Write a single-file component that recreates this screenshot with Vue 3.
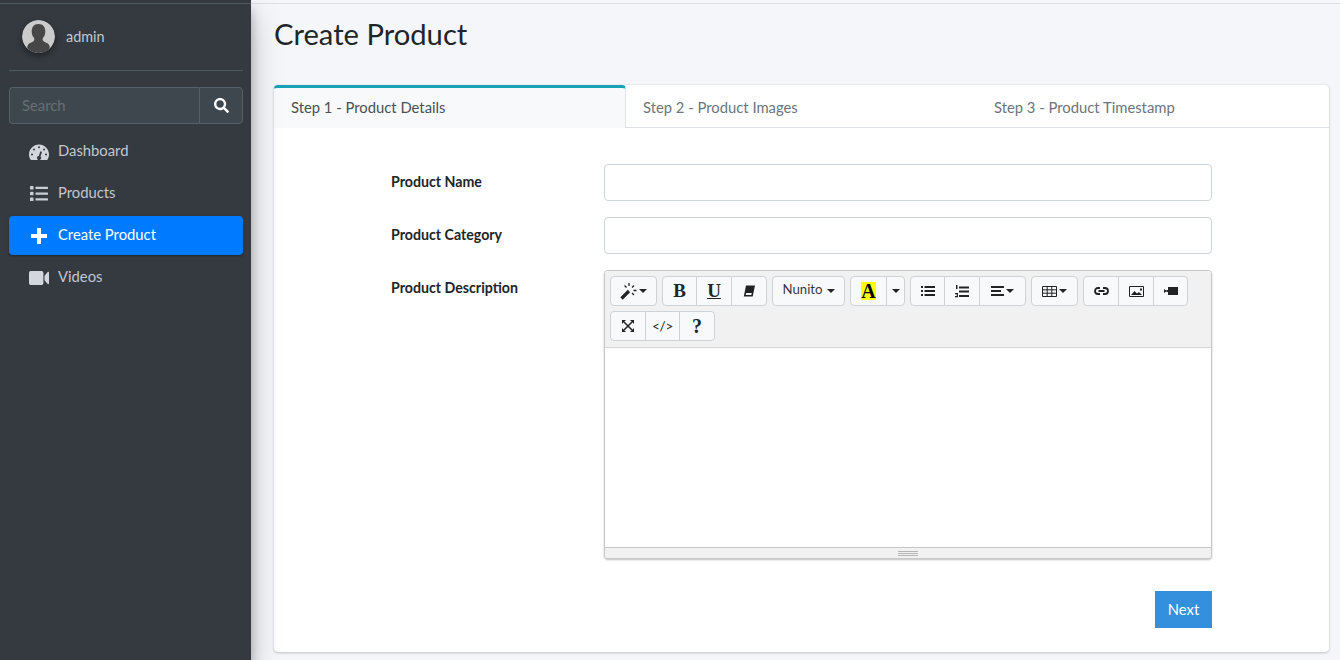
<template>
  <div class="wrapper">
    <aside class="sidebar">
      <div class="sidebar-top"></div>
      <div class="sidebar-body">
        <div class="user-panel">
          <svg class="avatar" viewBox="0 0 33 33">
            <defs><clipPath id="av"><circle cx="16.5" cy="16.5" r="16.5" /></clipPath></defs>
            <g clip-path="url(#av)">
              <rect width="33" height="33" fill="#cbcbcb" />
              <path d="M16.5 4c-4.8 0-7 3.400-6.800 7.800.1 2.800 1 4.800 2.400 6.300.5 1.500.2 2.800-1 3.500-2.600 1.300-5 2-5.800 4.600V33h22.400v-6.800c-.8-2.600-3.200-3.300-5.800-4.600-1.200-.7-1.500-2-1-3.500 1.400-1.500 2.300-3.500 2.400-6.300.2-4.400-2-7.800-6.800-7.800z" fill="#474747" />
            </g>
          </svg>
          <span class="user-name">admin</span>
        </div>
        <div class="search">
          <input class="search-input" placeholder="Search" />
          <button class="search-btn">
            <svg viewBox="0 0 512 512" width="15" height="15"><path fill="#fff" d="M505 442.700L405.300 343c-4.500-4.500-10.600-7-17-7H372c27.600-35.300 44-79.700 44-128C416 93.100 322.900 0 208 0S0 93.100 0 208s93.100 208 208 208c48.300 0 92.700-16.400 128-44v16.300c0 6.400 2.500 12.500 7 17l99.700 99.700c9.400 9.400 24.600 9.400 33.900 0l28.300-28.300c9.400-9.400 9.400-24.600.1-34zM208 336c-70.700 0-128-57.200-128-128 0-70.700 57.200-128 128-128 70.700 0 128 57.200 128 128 0 70.700-57.200 128-128 128z" /></svg>
          </button>
        </div>
        <nav class="nav">
          <a v-for="item in navItems" :key="item.label" class="nav-link" :class="{ active: item.active }">
            <span class="nav-icon">
              <svg v-if="item.icon === 'gauge'" viewBox="0 0 20 16" width="20" height="16">
                <path fill="#d3d6dc" fill-rule="evenodd" d="M10 .5C4.500.5 0 5 0 10.500c0 1.800.5 3.500 1.400 5 .2.300.5.500.9.500h15.400c.4 0 .7-.2.900-.5.9-1.500 1.400-3.200 1.400-5C20 5 15.500.5 10 .5zM10 2.300a1 1 0 1 1 0 2 1 1 0 0 1 0-2zM3 11.500a1 1 0 1 1 0-2 1 1 0 0 1 0 2zm2-5a1 1 0 1 1 0-2 1 1 0 0 1 0 2zm7.800 2.100l-1.300 4a2 2 0 1 1-1.700-.6l1.300-4a.9.9 0 0 1 1.700.6zM17 11.500a1 1 0 1 1 0-2 1 1 0 0 1 0 2zM15 6.500a1 1 0 1 1 0-2 1 1 0 0 1 0 2z" />
              </svg>
              <svg v-else-if="item.icon === 'list'" viewBox="0 0 18 15" width="18" height="15">
                <g fill="#c9cdd5">
                  <rect x="0" y="0" width="3.500" height="3.500" rx=".6" /><rect x="0" y="5.800" width="3.500" height="3.500" rx=".6" /><rect x="0" y="11.500" width="3.500" height="3.500" rx=".6" />
                  <rect x="5.500" y=".7" width="12.500" height="2.200" rx=".5" /><rect x="5.500" y="6.500" width="12.500" height="2.200" rx=".5" /><rect x="5.500" y="12.200" width="12.500" height="2.200" rx=".5" />
                </g>
              </svg>
              <svg v-else-if="item.icon === 'plus'" viewBox="0 0 16 16" width="16" height="16">
                <path fill="#fff" d="M6.500 0h3a.5.5 0 0 1 .5.500V6h5.500a.5.5 0 0 1 .5.500v3a.5.5 0 0 1-.5.500H10v5.500a.5.5 0 0 1-.5.500h-3a.5.5 0 0 1-.5-.5V10H.5a.5.5 0 0 1-.5-.5v-3A.5.5 0 0 1 .5 6H6V.5A.5.5 0 0 1 6.500 0z" />
              </svg>
              <svg v-else viewBox="0 0 20 14" width="20" height="14">
                <path fill="#d3d6dc" d="M1.700 0h11a1.700 1.700 0 0 1 1.700 1.700v10.600a1.700 1.700 0 0 1-1.700 1.700h-11A1.700 1.700 0 0 1 0 12.300V1.700A1.700 1.700 0 0 1 1.700 0zM15.500 4.700L18.700 1c.5-.5 1.300-.1 1.300.5v11c0 .6-.8 1-1.300.5l-3.200-3.700z" />
              </svg>
            </span>
            <span class="nav-text">{{ item.label }}</span>
          </a>
        </nav>
      </div>
    </aside>

    <main class="content">
      <h1 class="page-title">Create Product</h1>
      <section class="card">
        <div class="tabs">
          <div v-for="(tab, i) in tabs" :key="tab" class="tab" :class="['tab-' + i, { active: i === 0 }]">{{ tab }}</div>
        </div>
        <div class="form">
          <div class="row">
            <label class="label">Product Name</label>
            <input class="control" />
          </div>
          <div class="row">
            <label class="label">Product Category</label>
            <input class="control" />
          </div>
          <div class="row">
            <label class="label">Product Description</label>
            <div class="editor">
              <div class="toolbar">
                <div class="btn-group">
                  <button class="tb-btn w47">
                    <svg viewBox="0 0 17 17" width="17" height="17">
                      <path stroke="#222" stroke-width="3.200" d="M1.500 15.500L9 8" />
                      <path stroke="#222" stroke-width="1.300" fill="none" d="M9 0v3M14 2.500l-2 2M16.500 7.500h-3M14 12l-2-2M4.500 2.500l2 2" />
                    </svg>
                    <i class="caret" />
                  </button>
                </div>
                <div class="btn-group">
                  <button class="tb-btn w35 serif"><b>B</b></button>
                  <button class="tb-btn w36 serif"><b class="u">U</b></button>
                  <button class="tb-btn w36">
                    <svg viewBox="0 0 12 12" width="12" height="12"><path fill="#222" fill-rule="evenodd" d="M3 .5h9l-2.300 11H.8zM3.200 8l-.5 2.100h5.600l.5-2.100z" /></svg>
                  </button>
                </div>
                <div class="btn-group">
                  <button class="tb-btn w73 font-name"><span>Nunito</span> <i class="caret" /></button>
                </div>
                <div class="btn-group">
                  <button class="tb-btn w37 serif"><b class="hl">A</b></button>
                  <button class="tb-btn w19"><i class="caret" /></button>
                </div>
                <div class="btn-group">
                  <button class="tb-btn w35">
                    <svg viewBox="0 0 14 10" width="14" height="10"><g fill="#222"><rect x="0" y="0" width="2" height="2" /><rect x="0" y="4" width="2" height="2" /><rect x="0" y="8" width="2" height="2" /><rect x="3.500" y="0" width="10.500" height="2" /><rect x="3.500" y="4" width="10.500" height="2" /><rect x="3.500" y="8" width="10.500" height="2" /></g></svg>
                  </button>
                  <button class="tb-btn w36">
                    <svg viewBox="0 0 14 13" width="14" height="13"><g fill="#222"><rect x="4" y="1.500" width="10" height="2" /><rect x="4" y="5.500" width="10" height="2" /><rect x="4" y="10" width="10" height="2" /><rect x="1" y="0" width="1.500" height="4" /><rect x="0" y="8" width="3" height="1.300" /><rect x="0" y="11" width="3" height="1.300" /><rect x="1.800" y="8" width="1.200" height="3" /></g></svg>
                  </button>
                  <button class="tb-btn w47">
                    <svg viewBox="0 0 13 10" width="13" height="10"><g fill="#222"><rect x="0" y="0" width="13" height="2" /><rect x="0" y="4" width="10" height="2" /><rect x="0" y="8" width="13" height="2" /></g></svg>
                    <i class="caret" />
                  </button>
                </div>
                <div class="btn-group">
                  <button class="tb-btn w47">
                    <svg viewBox="0 0 15 11" width="15" height="11"><path fill="none" stroke="#222" d="M.5.500h14v10H.5zM.5 3.800h14M.5 7.200h14M5.200.5v10M9.800.5v10" /></svg>
                    <i class="caret" />
                  </button>
                </div>
                <div class="btn-group">
                  <button class="tb-btn w36">
                    <svg viewBox="0 0 15 8" width="15" height="8"><path fill="none" stroke="#222" stroke-width="1.800" d="M6 1H4a3 3 0 0 0 0 6h2M9 1h2a3 3 0 0 1 0 6H9M4.500 4h6" /></svg>
                  </button>
                  <button class="tb-btn w36">
                    <svg viewBox="0 0 15 11" width="15" height="11"><path fill="none" stroke="#222" d="M.5.500h14v10H.5z" /><path fill="#222" d="M2 9l3.500-4 2.500 2.500 2-1.500 3 3zM11 2.500h2v2h-2z" /></svg>
                  </button>
                  <button class="tb-btn w35">
                    <svg viewBox="0 0 14 8" width="14" height="8"><path fill="#222" d="M4 0h10v8H4zM0 2l3 2-3 2z" /><rect x="2.500" y="3" width="2" height="2" fill="#222" /></svg>
                  </button>
                </div>
                <div class="btn-group">
                  <button class="tb-btn w36">
                    <svg viewBox="0 0 12 12" width="12" height="12"><g fill="none" stroke="#222" stroke-width="1.500"><path d="M2 2l8 8M10 2l-8 8" /></g><g fill="#222"><path d="M0 0h4L0 4zM12 0v4L8 0zM0 12V8l4 4zM12 12H8l4-4z" /></g></svg>
                  </button>
                  <button class="tb-btn w35 code">&lt;/&gt;</button>
                  <button class="tb-btn w36 serif help"><b>?</b></button>
                </div>
              </div>
              <div class="editing-area"></div>
              <div class="statusbar"><span class="grip" /></div>
            </div>
          </div>
          <div class="actions">
            <button class="next">Next</button>
          </div>
        </div>
      </section>
    </main>
  </div>
</template>

<script setup>
const navItems = [
  { label: 'Dashboard', icon: 'gauge' },
  { label: 'Products', icon: 'list' },
  { label: 'Create Product', icon: 'plus', active: true },
  { label: 'Videos', icon: 'video' }
]
const tabs = ['Step 1 - Product Details', 'Step 2 - Product Images', 'Step 3 - Product Timestamp']
</script>

<style>
html, body { margin: 0; height: 100%; overflow: hidden; }
</style>

<style scoped>
.wrapper {
  display: flex;
  height: 660px;
  font-family: Lato, "Noto Sans", sans-serif;
  font-size: 14.8px;
  color: #212529;
  background: #f4f6f9;
  overflow: hidden;
}
.sidebar {
  width: 251px;
  flex: none;
  background: #343a40;
  box-shadow: 0 14px 28px rgba(0,0,0,.25), 0 10px 10px rgba(0,0,0,.22);
  position: relative;
}
.sidebar-top { height: 3px; border-bottom: 1px solid #4f5962; }
.sidebar-body { padding: 0 8px 0 9px; }
.user-panel {
  display: flex;
  align-items: center;
  gap: 11px;
  height: 67px;
  margin-bottom: 16px;
  padding: 0 0 2px 13px;
  border-bottom: 1px solid #4f5962;
  box-sizing: border-box;
}
.avatar { width: 33px; height: 33px; border-radius: 50%; box-shadow: 0 3px 6px rgba(0,0,0,.4); }
.user-name { color: #c2c7d0; font-size: 14.4px; }
.search {
  display: flex;
  height: 37px;
  margin-bottom: 8px;
}
.search-input {
  flex: 1;
  min-width: 0;
  box-sizing: border-box;
  padding: 0 12px 2px;
  background: #3f474e;
  border: 1px solid #56606a;
  border-right: 0;
  border-radius: 4px 0 0 4px;
  color: #fff;
  font: inherit;
  outline: none;
}
.search-input::placeholder { color: #656f77; opacity: 1; }
.search-btn {
  width: 44px;
  background: #3f474e;
  border: 1px solid #56606a;
  border-radius: 0 4px 4px 0;
  display: flex;
  align-items: center;
  justify-content: center;
  padding: 0;
}
.nav { display: flex; flex-direction: column; gap: 3px; }
.nav-link {
  display: flex;
  align-items: center;
  height: 39px;
  border-radius: 4px;
  color: #c2c7d0;
}
.nav-link.active {
  background: #007bff;
  color: #fff;
  box-shadow: 0 1px 3px rgba(0,0,0,.12), 0 1px 2px rgba(0,0,0,.24);
}
.nav-icon {
  width: 49px;
  flex: none;
  box-sizing: border-box;
  padding-left: 10px;
  display: flex;
  justify-content: center;
}
.nav-text { margin-top: -3px; }
.content {
  flex: 1;
  min-width: 0;
  box-sizing: border-box;
  margin-top: 3px;
  padding: 0 11px 0 23px;
  border-top: 1px solid #dee2e6;
}
.page-title {
  margin: 0;
  height: 81px;
  padding-top: 11px;
  box-sizing: border-box;
  font-size: 29.2px;
  font-weight: 400;
  line-height: 37px;
  color: #212529;
}
.card {
  height: 567px;
  box-sizing: border-box;
  background: #fff;
  border-radius: 4px;
  box-shadow: 0 0 1px rgba(0,0,0,.125), 0 1px 3px rgba(0,0,0,.2);
}
.tabs {
  display: flex;
  height: 43px;
  border-bottom: 1px solid #dee2e6;
  box-sizing: border-box;
}
.tab {
  box-sizing: border-box;
  padding: 12px 0 0 17px;
  color: #6c757d;
  line-height: 20px;
}
.tab-0 { width: 352px; }
.tab-1 { width: 351px; }
.tab.active {
  height: 43px;
  background: #f8f9fa;
  color: #495057;
  border-top: 3px solid #17a2b8;
  border-right: 1px solid #dee2e6;
  border-radius: 4px 4px 0 0;
  padding-top: 9px;
}
.form { padding: 36px 117px 0; }
.row { display: flex; margin-bottom: 16px; }
.label {
  width: 213px;
  flex: none;
  padding-top: 7px;
  font-weight: 700;
  font-size: 14.2px;
  line-height: 21px;
  color: #212529;
}
.control {
  flex: 1;
  min-width: 0;
  height: 37px;
  box-sizing: border-box;
  border: 1px solid #ced4da;
  border-radius: 4px;
  background: #fff;
  outline: none;
}
.editor {
  flex: 1;
  min-width: 0;
  height: 289px;
  box-sizing: border-box;
  border: 1px solid #c7c7c7;
  border-radius: 4px;
  box-shadow: 0 1px 2px rgba(0,0,0,.25);
  display: flex;
  flex-direction: column;
  background: #fff;
  overflow: hidden;
}
.toolbar {
  display: flex;
  flex-wrap: wrap;
  align-content: flex-start;
  gap: 5px;
  height: 77px;
  flex: none;
  box-sizing: border-box;
  padding: 5px 5px 0;
  background: #f1f1f1;
  border-bottom: 1px solid #d5d5d5;
}
.btn-group { display: flex; }
.tb-btn {
  height: 30px;
  box-sizing: border-box;
  display: inline-flex;
  align-items: center;
  justify-content: center;
  gap: 2px;
  padding: 0;
  margin-left: -1px;
  background: #f8f9fa;
  border: 1px solid #cfd2d4;
  color: #212529;
  font: inherit;
}
.btn-group .tb-btn:first-child { margin-left: 0; border-radius: 4px 0 0 4px; }
.btn-group .tb-btn:last-child { border-top-right-radius: 4px; border-bottom-right-radius: 4px; }
.btn-group .tb-btn:only-child { border-radius: 4px; }
.w19 { width: 19px; }
.w35 { width: 35px; }
.w36 { width: 36px; }
.w37 { width: 37px; }
.w47 { width: 47px; }
.w73 { width: 73px; }
.serif { font-family: "Liberation Serif", serif; font-size: 19px; }
.help { font-size: 20px; }
.u { text-decoration: underline; }
.hl { background: #ff0; color: #000; padding: 0 .5px; line-height: 18px; font-size: 20px; }
.font-name { font-size: 13.2px; color: #343a40; gap: 4px; }
.font-name span { margin-top: -5px; }
.code { font-size: 13.5px; letter-spacing: -.3px; }
.caret {
  display: inline-block;
  width: 0;
  height: 0;
  border-top: 4px solid #212529;
  border-left: 4px solid transparent;
  border-right: 4px solid transparent;
}
.editing-area { flex: 1; background: #fff; }
.statusbar {
  height: 10px;
  flex: none;
  background: #f1f1f1;
  border-top: 1px solid #c7c7c7;
  display: flex;
  align-items: center;
  justify-content: center;
}
.grip {
  width: 20px;
  height: 5px;
  border-top: 1px solid #b5b5b5;
  border-bottom: 1px solid #b5b5b5;
  box-sizing: border-box;
  background: linear-gradient(#b5b5b5, #b5b5b5) center / 100% 1px no-repeat;
}
.actions { display: flex; justify-content: flex-end; padding-top: 16px; }
.next {
  width: 57px;
  height: 37px;
  background: #3490dc;
  border: 0;
  color: #fff;
  font: inherit;
  padding: 0 0 2px;
}
</style>
